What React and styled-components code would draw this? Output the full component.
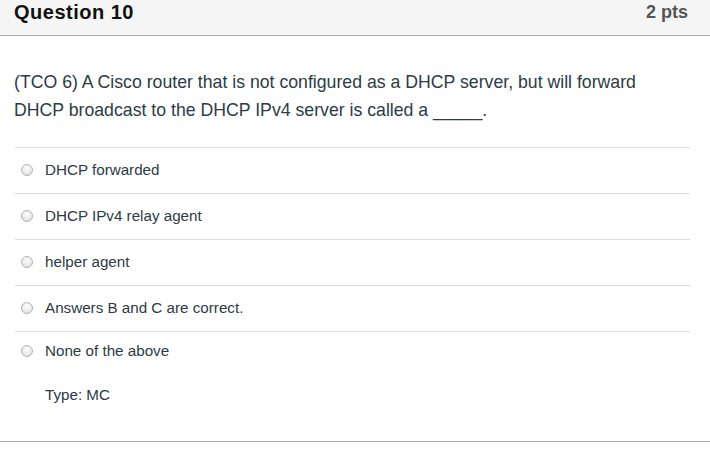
import React from "react";
import styled, { createGlobalStyle } from "styled-components";

const Global = createGlobalStyle`
  html, body { margin: 0; padding: 0; background: #fff; }
  body { font-family: "Liberation Sans", Arial, Helvetica, sans-serif; }
`;

const Card = styled.div`
  width: 710px;
  border-bottom: 1px solid #a9a9a9;
  padding-bottom: 36px;
`;

const Header = styled.div`
  height: 36px;
  box-sizing: border-box;
  background: #f5f5f5;
  border-bottom: 1px solid #aaaaaa;
  display: flex;
  justify-content: space-between;
  align-items: flex-start;
  padding: 0 22px 0 14px;
`;

const Title = styled.div`
  font-size: 20px;
  line-height: 24px;
  font-weight: bold;
  color: #111;
  letter-spacing: 0.5px;
`;

const Points = styled.div`
  font-size: 18px;
  line-height: 24px;
  font-weight: bold;
  color: #555;
`;

const QuestionText = styled.p`
  margin: 32px 0 23px 14px;
  max-width: 650px;
  font-size: 17.7px;
  line-height: 28px;
  color: #2d3b45;
`;

const Answers = styled.div`
  margin: 0 20px 0 15px;
  display: flex;
  flex-direction: column;
`;

const AnswerRow = styled.label`
  display: flex;
  align-items: center;
  gap: 12px;
  border-top: 1px solid #dddddd;
  padding: ${(p) => (p.$last ? "8px 0 12px" : "11px 0 13px")};
  padding-left: 6px;
  font-size: 15.2px;
  line-height: 21px;
  color: #2d3b45;
`;

const Radio = styled.span`
  width: 12px;
  height: 12px;
  box-sizing: border-box;
  border-radius: 50%;
  border: 1px solid #b4b4b4;
  background: radial-gradient(circle at 50% 35%, #fdfdfd 0%, #e9e9e9 60%, #d4d4d4 100%);
  flex: none;
`;

const TypeLabel = styled.div`
  margin: 11px 0 0 45px;
  font-size: 15.2px;
  line-height: 21px;
  color: #2d3b45;
`;

const answers = [
  "DHCP forwarded",
  "DHCP IPv4 relay agent",
  "helper agent",
  "Answers B and C are correct.",
  "None of the above",
];

export default function App() {
  return (
    <>
      <Global />
      <Card>
        <Header>
          <Title>Question 10</Title>
          <Points>2 pts</Points>
        </Header>
        <QuestionText>
          (TCO 6) A Cisco router that is not configured as a DHCP server, but will forward
          DHCP broadcast to the DHCP IPv4 server is called a _____.
        </QuestionText>
        <Answers>
          {answers.map((a, i) => (
            <AnswerRow key={a} $last={i === answers.length - 1}>
              <Radio />
              <span>{a}</span>
            </AnswerRow>
          ))}
        </Answers>
        <TypeLabel>Type: MC</TypeLabel>
      </Card>
    </>
  );
}
